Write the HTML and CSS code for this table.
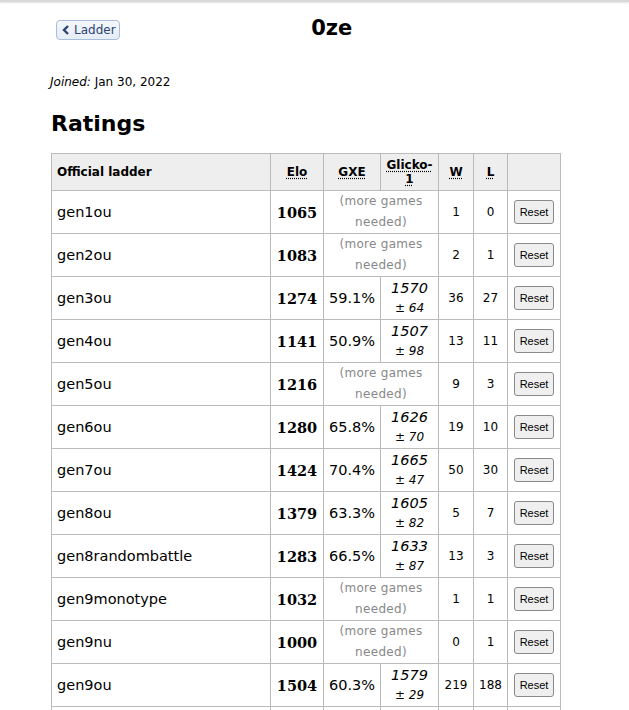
FILE: index.html
```html
<!DOCTYPE html>
<html lang="en">
<head>
  <meta charset="UTF-8" />
  <title>0ze - Ladder</title>
  <link rel="stylesheet" href="styles.css">
</head>
<body>
  <div class="topbar"></div>
  <div class="page">
    <div class="header">
      <a class="back" href="#">
        <svg width="8" height="10" viewBox="0 0 8 10"><path d="M6 1 L2 5 L6 9" fill="none" stroke="#2d4470" stroke-width="2.4"/></svg>
        Ladder
      </a>
      <h1>0ze</h1>
    </div>

    <p class="joined"><em>Joined:</em> Jan 30, 2022</p>

    <h2>Ratings</h2>

    <table class="ratings">
      <colgroup>
        <col class="c-format"><col class="c-elo"><col class="c-gxe"><col class="c-glicko"><col class="c-w"><col class="c-l"><col class="c-reset">
      </colgroup>
      <tr>
        <th class="format">Official ladder</th>
        <th><abbr title="Elo rating">Elo</abbr></th>
        <th><abbr title="user's percentage chance of winning a random battle">GXE</abbr></th>
        <th><abbr title="Glicko-1 rating">Glicko-1</abbr></th>
        <th><abbr title="Wins">W</abbr></th>
        <th><abbr title="Losses">L</abbr></th>
        <th></th>
      </tr>
      <tr>
        <td class="format">gen1ou</td><td class="elo">1065</td>
        <td class="more" colspan="2">(more games needed)</td>
        <td class="num">1</td><td class="num">0</td><td><button>Reset</button></td>
      </tr>
      <tr>
        <td class="format">gen2ou</td><td class="elo">1083</td>
        <td class="more" colspan="2">(more games needed)</td>
        <td class="num">2</td><td class="num">1</td><td><button>Reset</button></td>
      </tr>
      <tr>
        <td class="format">gen3ou</td><td class="elo">1274</td><td class="gxe">59.1%</td>
        <td class="glicko"><em>1570</em><br><small>± 64</small></td>
        <td class="num">36</td><td class="num">27</td><td><button>Reset</button></td>
      </tr>
      <tr>
        <td class="format">gen4ou</td><td class="elo">1141</td><td class="gxe">50.9%</td>
        <td class="glicko"><em>1507</em><br><small>± 98</small></td>
        <td class="num">13</td><td class="num">11</td><td><button>Reset</button></td>
      </tr>
      <tr>
        <td class="format">gen5ou</td><td class="elo">1216</td>
        <td class="more" colspan="2">(more games needed)</td>
        <td class="num">9</td><td class="num">3</td><td><button>Reset</button></td>
      </tr>
      <tr>
        <td class="format">gen6ou</td><td class="elo">1280</td><td class="gxe">65.8%</td>
        <td class="glicko"><em>1626</em><br><small>± 70</small></td>
        <td class="num">19</td><td class="num">10</td><td><button>Reset</button></td>
      </tr>
      <tr>
        <td class="format">gen7ou</td><td class="elo">1424</td><td class="gxe">70.4%</td>
        <td class="glicko"><em>1665</em><br><small>± 47</small></td>
        <td class="num">50</td><td class="num">30</td><td><button>Reset</button></td>
      </tr>
      <tr>
        <td class="format">gen8ou</td><td class="elo">1379</td><td class="gxe">63.3%</td>
        <td class="glicko"><em>1605</em><br><small>± 82</small></td>
        <td class="num">5</td><td class="num">7</td><td><button>Reset</button></td>
      </tr>
      <tr>
        <td class="format">gen8randombattle</td><td class="elo">1283</td><td class="gxe">66.5%</td>
        <td class="glicko"><em>1633</em><br><small>± 87</small></td>
        <td class="num">13</td><td class="num">3</td><td><button>Reset</button></td>
      </tr>
      <tr>
        <td class="format">gen9monotype</td><td class="elo">1032</td>
        <td class="more" colspan="2">(more games needed)</td>
        <td class="num">1</td><td class="num">1</td><td><button>Reset</button></td>
      </tr>
      <tr>
        <td class="format">gen9nu</td><td class="elo">1000</td>
        <td class="more" colspan="2">(more games needed)</td>
        <td class="num">0</td><td class="num">1</td><td><button>Reset</button></td>
      </tr>
      <tr>
        <td class="format">gen9ou</td><td class="elo">1504</td><td class="gxe">60.3%</td>
        <td class="glicko"><em>1579</em><br><small>± 29</small></td>
        <td class="num">219</td><td class="num">188</td><td><button>Reset</button></td>
      </tr>
      <tr>
        <td class="format">gen9randombattle</td><td class="elo">1322</td><td class="gxe">58.7%</td>
        <td class="glicko"><em>1561</em><br><small>± 41</small></td>
        <td class="num">24</td><td class="num">18</td><td><button>Reset</button></td>
      </tr>
    </table>
  </div>
</body>
</html>
```

FILE: styles.css
```css
body {
  margin: 0;
  font-family: "DejaVu Sans", Verdana, sans-serif;
  color: #000;
  background: #fff;
}

.topbar {
  height: 2px;
  background: #d8d8d8;
  box-shadow: 0 1px 2px rgba(0, 0, 0, 0.12);
}

.page {
  padding: 0 51px;
}

.header {
  display: flex;
  align-items: center;
  margin-top: 13px;
  padding-right: 34px;
}

.back {
  display: flex;
  align-items: center;
  gap: 4px;
  margin-left: 5px;
  height: 18px;
  padding: 0 3px 0 5px;
  border: 1px solid #a9bcd9;
  border-radius: 4px;
  background: linear-gradient(#f4f7fc, #e6edf7);
  color: #2d4470;
  font-size: 12px;
  text-decoration: none;
}

.header h1 {
  flex: 1;
  margin: 0 0 3px;
  line-height: 26px;
  text-align: center;
  font-size: 21px;
}

.joined {
  margin: 31px 0 0 -1px;
  font-size: 12px;
}

h2 {
  margin: 22px 0 17px;
  font-size: 22px;
}

.ratings {
  border-collapse: collapse;
  table-layout: fixed;
  width: 510px;
  font-size: 14.5px;
}

.c-format { width: 219px; }
.c-elo { width: 53px; }
.c-gxe { width: 57px; }
.c-glicko { width: 58px; }
.c-w { width: 35px; }
.c-l { width: 34px; }
.c-reset { width: 53px; }

.ratings th,
.ratings td {
  border: 1px solid #bbb;
  text-align: center;
  vertical-align: middle;
  padding: 0 4px;
}

.ratings th {
  background: #eee;
  font-size: 12px;
  line-height: 14px;
  height: 36px;
  padding: 0 4px;
}

.ratings abbr {
  text-decoration: underline dotted;
  text-underline-offset: 2px;
}

.ratings td {
  height: 42px;
}

.ratings .format {
  text-align: left;
  padding-left: 5px;
}

.elo {
  font-family: "DejaVu Serif", Georgia, serif;
  font-weight: bold;
}

.more {
  color: #888;
  font-size: 12px;
  line-height: 21px;
  letter-spacing: 0.3px;
}

.glicko {
  line-height: 19px;
}

.glicko small {
  font-size: 12px;
  font-style: italic;
}

.num {
  font-size: 12px;
}

button {
  font-family: "Liberation Sans", Arial, sans-serif;
  font-size: 11px;
  line-height: 14px;
  padding: 4px 5px;
  border: 1px solid #8a8a8a;
  border-radius: 3px;
  background: #efefef;
  color: #000;
}
```
